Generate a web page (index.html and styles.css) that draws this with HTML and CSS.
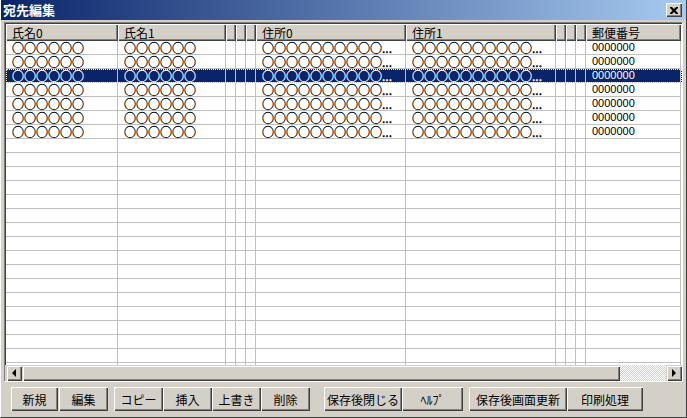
FILE: index.html
```html
<!DOCTYPE html>
<html lang="ja">
<head>
    <meta charset="UTF-8">
    <title>宛先編集</title>
    <link rel="stylesheet" href="styles.css">
</head>
<body>
    <div class="window">
        <div class="titlebar">
            <span class="title">宛先編集</span>
            <div class="close">
                <svg width="8" height="7" viewBox="0 0 8 7">
                    <path d="M0 0h2l2 2 2-2h2v1l-2.5 2.5 2.5 2.5v1h-2l-2-2-2 2h-2v-1l2.5-2.5-2.5-2.5z" fill="#000"/>
                </svg>
            </div>
        </div>

        <div class="grid">
            <div class="grid-view">
                <div class="row head">
                    <div class="cell">氏名0</div>
                    <div class="cell">氏名1</div>
                    <div class="cell"></div>
                    <div class="cell"></div>
                    <div class="cell"></div>
                    <div class="cell">住所0</div>
                    <div class="cell">住所1</div>
                    <div class="cell"></div>
                    <div class="cell"></div>
                    <div class="cell"></div>
                    <div class="cell">郵便番号</div>
                </div>
                <div id="rows"></div>
            </div>
            <div class="hscroll">
                <div class="sbtn"><span class="tri left"></span></div>
                <div class="thumb"></div>
                <div class="track"></div>
                <div class="sbtn"><span class="tri right"></span></div>
            </div>
        </div>

        <div class="toolbar">
            <div class="group">
                <button class="btn w47">新規</button>
                <button class="btn">編集</button>
            </div>
            <div class="group tight">
                <button class="btn">コピー</button>
                <button class="btn">挿入</button>
                <button class="btn">上書き</button>
                <button class="btn">削除</button>
            </div>
            <div class="group far tight">
                <button class="btn w78">保存後閉じる</button>
                <button class="btn w61">ﾍﾙﾌﾟ</button>
            </div>
            <div class="group tight">
                <button class="btn w98">保存後画面更新</button>
                <button class="btn w76">印刷処理</button>
            </div>
        </div>
    </div>

    <script>
        // 7 records, the rest of the view is empty rows
        const name = '○○○○○○';
        const addr = '○○○○○○○○○○...';
        const zip = '0000000';
        const rowCount = 24;
        const filled = 7;
        const selected = 2;

        const rows = document.getElementById('rows');
        for (let i = 0; i < rowCount; i++) {
            const has = i < filled;
            const vals = has
                ? [name, name, '', '', '', addr, addr, '', '', '', zip]
                : ['', '', '', '', '', '', '', '', '', '', ''];
            let html = '';
            vals.forEach((v, c) => {
                const cls = c === 10 ? 'cell num' : 'cell';
                html += `<div class="${cls}">${v}</div>`;
            });
            const row = document.createElement('div');
            row.className = i === selected ? 'row sel' : 'row';
            row.innerHTML = html;
            rows.appendChild(row);
        }
    </script>
</body>
</html>
```

FILE: styles.css
```css
body {
    margin: 0;
    font-family: "Noto Sans CJK JP", sans-serif;
    font-size: 12px;
    color: #000;
    background-color: #d4d0c8;
}
.window {
    width: 687px;
    height: 418px;
    box-sizing: border-box;
    border-left: 1px solid #fff;
    border-right: 1px solid #404040;
    border-bottom: 1px solid #404040;
    display: flex;
    flex-direction: column;
    overflow: hidden;
}
.titlebar {
    height: 20px;
    flex: none;
    display: flex;
    align-items: center;
    justify-content: space-between;
    padding: 0 4px 0 2px;
    background: linear-gradient(to right, #0a246a, #a6caf0);
    color: #fff;
}
.title {
    font-weight: bold;
    font-size: 13px;
    line-height: 16px;
}
.close {
    width: 16px;
    height: 14px;
    box-sizing: border-box;
    display: flex;
    align-items: center;
    justify-content: center;
    background-color: #d4d0c8;
    box-shadow: inset 1px 1px #fff, inset -1px -1px #404040, inset -2px -2px #808080;
}

/* list view */
.grid {
    margin: 2px 3px 0 3px;
    flex: none;
    height: 360px;
    box-sizing: border-box;
    border-top: 1px solid #808080;
    border-left: 1px solid #808080;
    border-right: 1px solid #fff;
    border-bottom: 1px solid #fff;
    display: flex;
    flex-direction: column;
}
.grid-view {
    flex: 1;
    overflow: hidden;
    background-color: #fff;
    border-top: 1px solid #404040;
    border-left: 1px solid #404040;
}
.row {
    display: grid;
    grid-template-columns: 112px 108px 10px 10px 10px 150px 150px 10px 10px 10px 95px;
    height: 14px;
}
.cell {
    box-sizing: border-box;
    border-right: 1px solid #c0c0c0;
    border-bottom: 1px solid #c0c0c0;
    padding-left: 6px;
    line-height: 13px;
    white-space: nowrap;
    -webkit-text-stroke: 0.3px currentColor;
}
.cell.num {
    font-family: "Liberation Sans", sans-serif;
    font-size: 11px;
    -webkit-text-stroke: 0;
}
.row.head {
    height: 17px;
}
.head .cell {
    background-color: #d4d0c8;
    border: none;
    line-height: 17px;
    -webkit-text-stroke: 0;
    box-shadow: inset 1px 1px #fff, inset -1px -1px #404040, inset -2px -2px #808080;
}
.row.sel {
    background-color: #0a246a;
    color: #fff;
    outline: 1px dotted #fffbd0;
    outline-offset: -1px;
}

/* horizontal scroll bar */
.hscroll {
    height: 16px;
    flex: none;
    display: flex;
    border-left: 1px solid #d4d0c8;
}
.sbtn, .thumb {
    height: 16px;
    box-sizing: border-box;
    background-color: #d4d0c8;
    box-shadow: inset 1px 1px #d4d0c8, inset 2px 2px #fff, inset -1px -1px #404040, inset -2px -2px #808080;
}
.sbtn {
    width: 16px;
    flex: none;
    display: flex;
    align-items: center;
    justify-content: center;
}
.thumb {
    width: 598px;
    flex: none;
}
.track {
    flex: 1;
    background: repeating-conic-gradient(#fff 0 25%, #d4d0c8 0 50%) 0 0 / 2px 2px;
}
.tri {
    width: 0;
    height: 0;
    border-top: 4px solid transparent;
    border-bottom: 4px solid transparent;
}
.tri.left {
    border-right: 4px solid #000;
}
.tri.right {
    border-left: 4px solid #000;
}

/* buttons */
.toolbar {
    display: flex;
    padding: 5px 0 0 10px;
}
.group {
    display: flex;
    gap: 1px;
    margin-right: 6px;
}
.group.tight {
    gap: 0;
}
.group.far {
    margin-left: 8px;
}
.btn {
    width: 49px;
    height: 24px;
    padding: 0;
    border: none;
    font-family: "Noto Sans CJK JP", sans-serif;
    font-size: 12px;
    color: #000;
    background-color: #d4d0c8;
    box-shadow: inset 1px 1px #fff, inset -1px -1px #404040, inset -2px -2px #808080;
}
.btn.w47 { width: 47px; }
.btn.w61 { width: 61px; }
.btn.w76 { width: 76px; }
.btn.w78 { width: 78px; }
.btn.w98 { width: 98px; }
```
